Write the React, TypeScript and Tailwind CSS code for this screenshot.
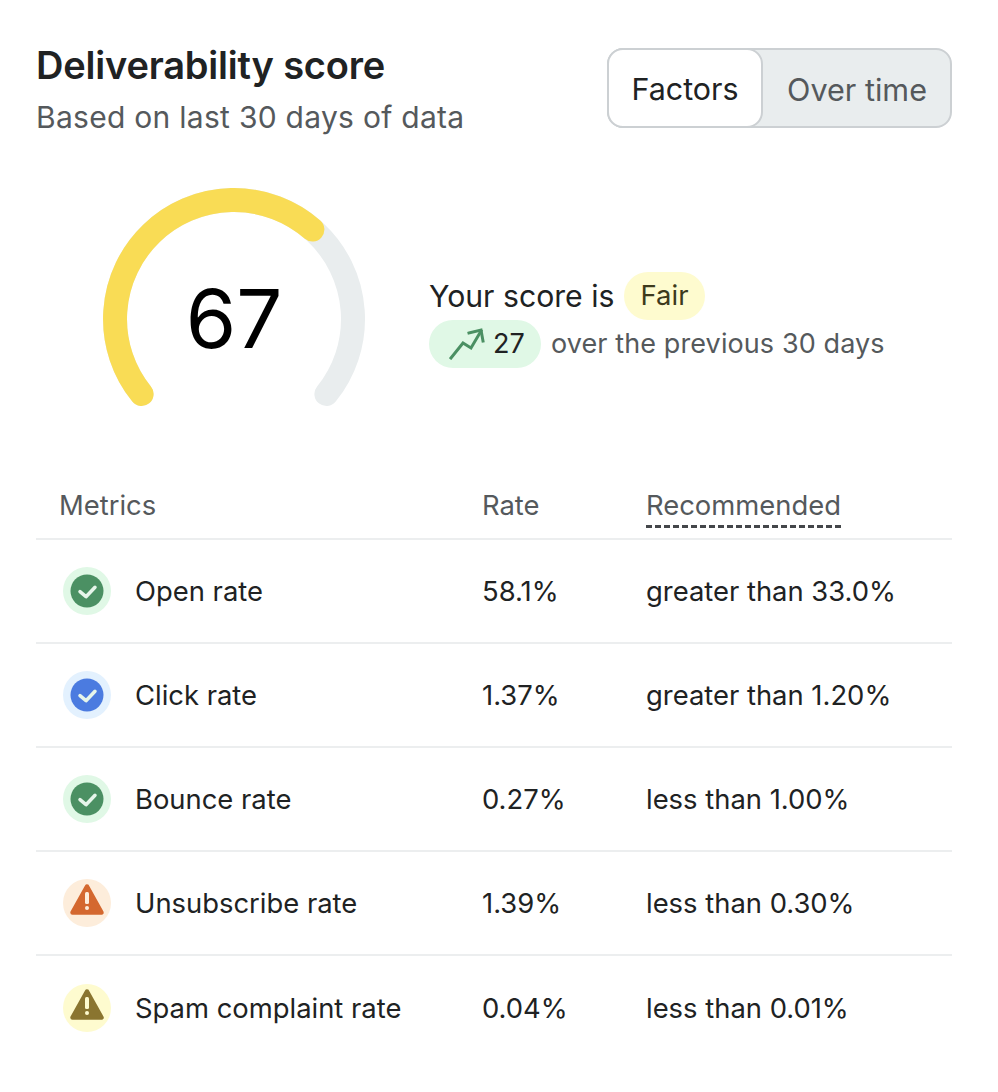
const rows = [
  { name: "Open rate", rate: "58.1%", rec: "greater than 33.0%", kind: "green" },
  { name: "Click rate", rate: "1.37%", rec: "greater than 1.20%", kind: "blue" },
  { name: "Bounce rate", rate: "0.27%", rec: "less than 1.00%", kind: "green" },
  { name: "Unsubscribe rate", rate: "1.39%", rec: "less than 0.30%", kind: "orange" },
  { name: "Spam complaint rate", rate: "0.04%", rec: "less than 0.01%", kind: "yellow" },
]

function CheckIcon({ color }: { color: string }) {
  return (
    <svg width="34" height="34" viewBox="0 0 34 34">
      <circle cx="17" cy="17" r="16.5" fill={color} />
      <path d="M10 17.7 L16 22.7 L25 13.3" fill="none" stroke="#e6f5ea" strokeWidth="3.5" strokeLinecap="round" strokeLinejoin="round" />
    </svg>
  )
}

function WarnIcon({ color, mark }: { color: string; mark: string }) {
  return (
    <svg width="36" height="36" viewBox="0 0 36 36" className="-mt-1">
      <path d="M18 3.5 L32.5 29.5 H3.5 Z" fill={color} stroke={color} strokeWidth="4.5" strokeLinejoin="round" />
      <rect x="16" y="9" width="4" height="12" rx="1.5" fill={mark} />
      <circle cx="18" cy="25" r="2" fill={mark} />
    </svg>
  )
}

function StatusIcon({ kind }: { kind: string }) {
  if (kind === "green") {
    return (
      <div className="w-12 h-12 rounded-full bg-[#e0f8e6] flex items-center justify-center">
        <CheckIcon color="#4b9063" />
      </div>
    )
  }
  if (kind === "blue") {
    return (
      <div className="w-12 h-12 rounded-full bg-[#e3f1fe] flex items-center justify-center">
        <CheckIcon color="#4b7be0" />
      </div>
    )
  }
  if (kind === "orange") {
    return (
      <div className="w-12 h-12 rounded-full bg-[#fdeddb] flex items-center justify-center">
        <WarnIcon color="#d4682f" mark="#fdeddb" />
      </div>
    )
  }
  return (
    <div className="w-12 h-12 rounded-full bg-[#fefbcf] flex items-center justify-center">
      <WarnIcon color="#8a7530" mark="#fefbcf" />
    </div>
  )
}

function Gauge() {
  return (
    <div className="relative w-[264px] h-[226px] shrink-0">
      <svg width="264" height="226" viewBox="0 0 264 226">
        <path d="M39.6 207 A119 119 0 1 1 224.4 207" fill="none" stroke="#e9edee" strokeWidth="24" strokeLinecap="round" />
        <path d="M39.6 207 A119 119 0 0 1 210.4 42.5" fill="none" stroke="#f9dc55" strokeWidth="24" strokeLinecap="round" />
      </svg>
      <div className="absolute inset-x-0 top-[85px] text-center text-[81.5px] leading-[94px] text-black">
        67
      </div>
    </div>
  )
}

export default function App() {
  return (
    <div className="w-[998px] h-[1092px] bg-white text-[#202223] pl-9 pr-[46px] pt-[40px] font-['Inter',sans-serif] overflow-hidden">

      <div className="flex items-start justify-between">
        <div>
          <h1 className="text-[38px] leading-[50px] font-semibold text-[#202223] tracking-[-0.2px]">
            Deliverability score
          </h1>
          <div className="text-[30px] leading-[40px] text-[#55595c] mt-[7px] tracking-[0.28px]">
            Based on last 30 days of data
          </div>
        </div>

        <div className="mt-2 flex w-[345px] h-[80px] rounded-[16px] border-2 border-[#ccd0d3] bg-[#e9edee]">
          <div className="w-[156px] -m-[2px] h-[80px] rounded-[16px] border-2 border-[#ccd0d3] bg-white flex items-center justify-center text-[30.4px] pt-1">
            Factors
          </div>
          <div className="flex-1 flex items-center justify-center text-[30.6px] text-[#55595c] pt-[3px] pl-[3px]">
            Over time
          </div>
        </div>
      </div>

      <div className="flex items-start mt-[50px] ml-[66px]">
        <Gauge />
        <div className="ml-[63px] mt-[85px]">
          <div className="flex items-center h-12">
            <span className="text-[30.2px] pt-[2px]">Your score is</span>
            <span className="ml-[10px] h-12 px-4 rounded-full bg-[#fefbcf] flex items-center text-[27.5px] text-[#3d3a1c]">
              Fair
            </span>
          </div>
          <div className="flex items-center h-12">
            <span className="h-12 w-[112px] rounded-full bg-[#e0f8e6] flex items-center pl-5 gap-2 text-[27px]">
              <svg width="36" height="32" viewBox="0 0 36 32" fill="none" stroke="#4b9063" strokeWidth="3" strokeLinecap="square" className="shrink-0">
                <path d="M2 30 L14 15 L22 20 L32 3" />
                <path d="M20 5 L32 2 L34 13" />
              </svg>
              27
            </span>
            <span className="ml-[10px] text-[27px] text-[#55595c] tracking-[0.1px]">
              over the previous 30 days
            </span>
          </div>
        </div>
      </div>

      <div className="mt-[55px]">
        <div className="grid grid-cols-[423px_164px_1fr] h-[72px] items-center pl-[23px] pt-[6px] border-b-2 border-[#eceeef] text-[27.4px] text-[#55595c]">
          <div>Metrics</div>
          <div>Rate</div>
          <div>
            <span className="border-b-[3px] border-dashed border-[#44474a] pb-[3px]">Recommended</span>
          </div>
        </div>

        {rows.map((row, i) => (
          <div
            key={row.name}
            className={`grid grid-cols-[423px_164px_1fr] h-[104px] items-center pl-[23px] text-[27.4px] ${i < rows.length - 1 ? "border-b-2 border-[#eceeef]" : ""}`}
          >
            <div className="flex items-center gap-6 pl-1">
              <StatusIcon kind={row.kind} />
              <span className="pt-[2px]">{row.name}</span>
            </div>
            <div className="pt-[2px]">{row.rate}</div>
            <div className="pt-[2px]">{row.rec}</div>
          </div>
        ))}
      </div>

    </div>
  )
}
